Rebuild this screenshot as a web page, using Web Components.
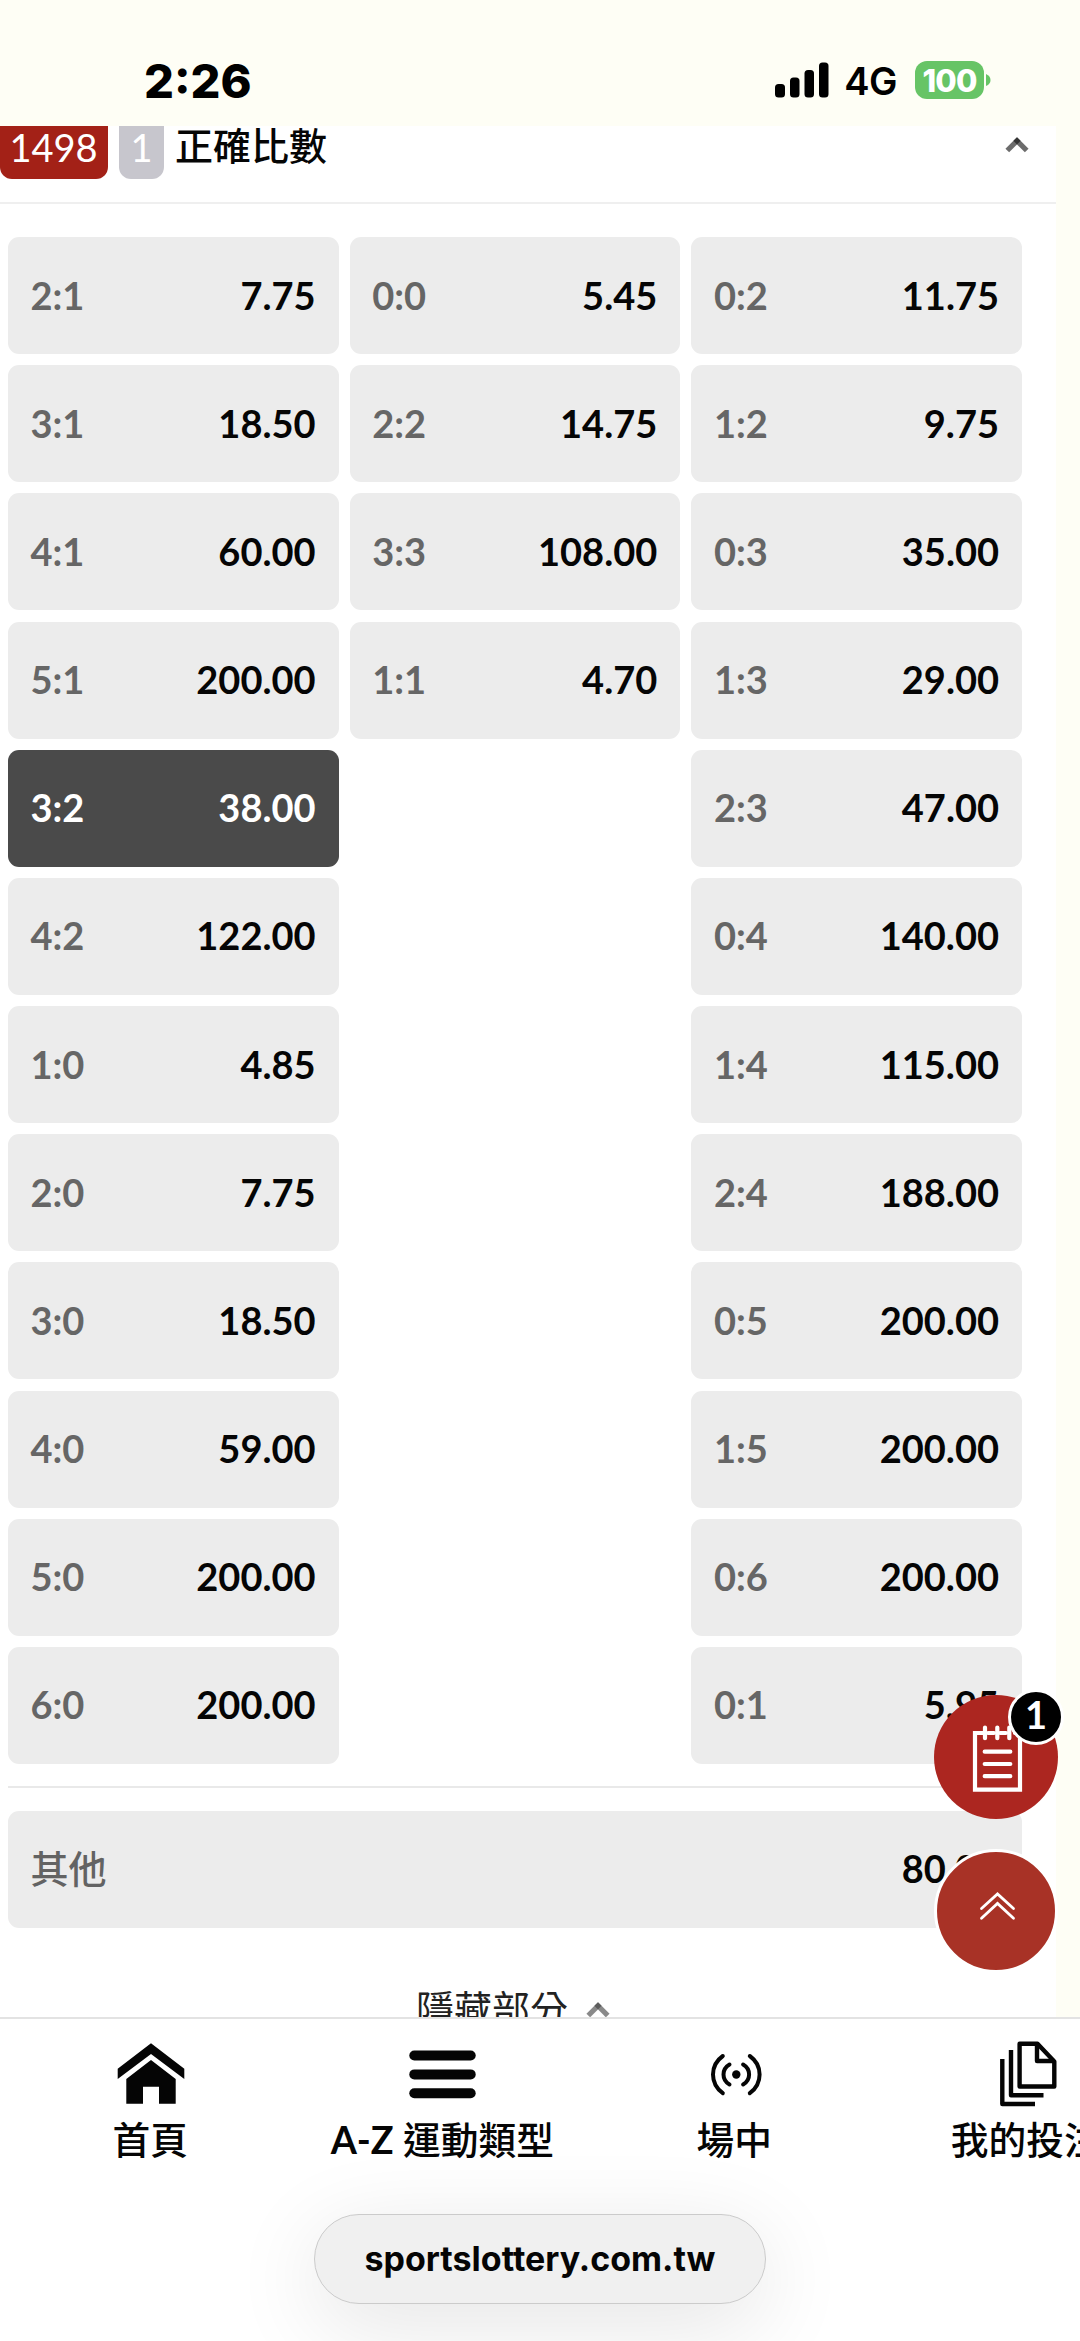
<!DOCTYPE html>
<html lang="zh-Hant">
<head>
<meta charset="utf-8">
<title>正確比數</title>
<style>
    html, body {
        margin: 0;
        padding: 0;
    }
    body {
        width: 1080px;
        height: 2341px;
        overflow: hidden;
        background: #fefef5;
        font-family: Lato, "Noto Sans CJK TC", sans-serif;
        font-size: 38px;
        color: #050505;
    }
</style>
</head>
<body>
<score-app></score-app>
<script>
class StatusBar extends HTMLElement {
    constructor() {
        super();
        this.attachShadow({mode: 'open'});
    }
    connectedCallback() {
        this.shadowRoot.innerHTML = `
            <style>
                :host {
                    display: flex;
                    align-items: center;
                    justify-content: space-between;
                    box-sizing: border-box;
                    height: 126px;
                    padding: 34px 89px 0 144px;
                    background: #fefef5;
                    font-family: Inter, sans-serif;
                    color: #000;
                }
                .time {
                    font-size: 47px;
                    font-weight: 800;
                }
                .right {
                    display: flex;
                    align-items: center;
                }
                .net {
                    font-size: 38px;
                    font-weight: 600;
                    letter-spacing: -.5px;
                    margin: 2px 18px 0 15px;
                }
                .battery {
                    width: 69px;
                    height: 38px;
                    line-height: 39px;
                    border-radius: 12px;
                    background: #67c466;
                    color: #fff;
                    font-size: 31px;
                    font-weight: 800;
                    letter-spacing: -.8px;
                    text-align: center;
                }
                svg {
                    display: block;
                }
                .nub {
                    margin-left: 2px;
                }
            </style>
            <span class="time">2:26</span>
            <div class="right">
                <svg width="54" height="36" viewBox="0 0 54 36">
                    <rect x="0" y="22" width="10" height="13.5" rx="3.5"/>
                    <rect x="15" y="15.5" width="9.5" height="20" rx="3.5"/>
                    <rect x="29.5" y="8" width="9.5" height="27.5" rx="3.5"/>
                    <rect x="44" y="0.5" width="9.5" height="35" rx="3.5"/>
                </svg>
                <span class="net">4G</span>
                <div class="battery">100</div>
                <svg class="nub" width="5" height="12" viewBox="0 0 5 12"><path d="M0 0Q4.500 2 4.500 6T0 12Z" fill="#67c466"/></svg>
            </div>
        `;
    }
}
customElements.define("status-bar", StatusBar);

class FoldArrow extends HTMLElement {
    constructor() {
        super();
        this.attachShadow({mode: 'open'});
    }
    connectedCallback() {
        this.shadowRoot.innerHTML = `
            <style>
                :host {
                    display: block;
                    width: 24px;
                    height: 17px;
                }
                svg {
                    display: block;
                }
            </style>
            <svg width="24" height="17" viewBox="0 0 24 17" stroke="#111" stroke-opacity=".62" stroke-width="5.200" fill="none">
                <path d="M2.300 14.500L13.800 3"/>
                <path d="M21.700 14.500L10.200 3"/>
            </svg>
        `;
    }
}
customElements.define("fold-arrow", FoldArrow);

class MarketHeader extends HTMLElement {
    constructor() {
        super();
        this.attachShadow({mode: 'open'});
    }
    connectedCallback() {
        this.shadowRoot.innerHTML = `
            <style>
                :host {
                    display: flex;
                    align-items: flex-start;
                    box-sizing: border-box;
                    height: 78px;
                    border-bottom: 2px solid #efefef;
                }
                .tag {
                    box-sizing: border-box;
                    height: 53px;
                    line-height: 43px;
                    border-radius: 0 0 12px 12px;
                    color: #fff;
                    text-align: center;
                }
                .id {
                    width: 108px;
                    padding-right: 1px;
                    background: #a32117;
                }
                .legs {
                    width: 45px;
                    margin: 0 11px;
                    background: #c7c6cd;
                }
                .name {
                    flex: 1;
                    line-height: 39px;
                    font-weight: 500;
                }
                fold-arrow {
                    margin: 10px 27px 0 0;
                }
            </style>
            <span class="tag id">${this.getAttribute("code")}</span>
            <span class="tag legs">${this.getAttribute("legs")}</span>
            <span class="name"><slot></slot></span>
            <fold-arrow></fold-arrow>
        `;
    }
}
customElements.define("market-header", MarketHeader);

class OddsButton extends HTMLElement {
    constructor() {
        super();
        this.attachShadow({mode: 'open'});
    }
    connectedCallback() {
        this.shadowRoot.innerHTML = `
            <style>
                :host {
                    display: flex;
                    align-items: center;
                    justify-content: space-between;
                    box-sizing: border-box;
                    height: 117px;
                    padding: 0 23px 2px 22.5px;
                    border-radius: 11px;
                    background: #ececec;
                    line-height: 46px;
                }
                .label {
                    color: #666;
                    font-weight: 700;
                }
                :host([wide]) .label {
                    color: #636363;
                    font-weight: 500;
                }
                .odds {
                    font-weight: 700;
                }
                :host([selected]) {
                    background: #4a4a4a;
                }
                :host([selected]) span {
                    color: #fff;
                }
            </style>
            <span class="label">${this.getAttribute("label")}</span>
            <span class="odds">${this.getAttribute("odds")}</span>
        `;
    }
}
customElements.define("odds-button", OddsButton);

const home = [
    ["2:1", "7.75"], ["3:1", "18.50"], ["4:1", "60.00"], ["5:1", "200.00"],
    ["3:2", "38.00"], ["4:2", "122.00"], ["1:0", "4.85"], ["2:0", "7.75"],
    ["3:0", "18.50"], ["4:0", "59.00"], ["5:0", "200.00"], ["6:0", "200.00"]
];
const draw = [["0:0", "5.45"], ["2:2", "14.75"], ["3:3", "108.00"], ["1:1", "4.70"]];
const away = [
    ["0:2", "11.75"], ["1:2", "9.75"], ["0:3", "35.00"], ["1:3", "29.00"],
    ["2:3", "47.00"], ["0:4", "140.00"], ["1:4", "115.00"], ["2:4", "188.00"],
    ["0:5", "200.00"], ["1:5", "200.00"], ["0:6", "200.00"], ["0:1", "5.95"]
];

class OddsBoard extends HTMLElement {
    constructor() {
        super();
        this.attachShadow({mode: 'open'});
    }
    connectedCallback() {
        const column = list => `<div class="col">${list.map(([label, odds]) =>
            `<odds-button label="${label}" odds="${odds}"${label === "3:2" ? " selected" : ""}></odds-button>`
        ).join('')}</div>`;
        this.shadowRoot.innerHTML = `
            <style>
                :host {
                    display: block;
                    padding: 33px 34px 0 8px;
                }
                .cols {
                    display: grid;
                    grid-template-columns: repeat(3, 1fr);
                    gap: 11.2px;
                    padding-bottom: 22px;
                    border-bottom: 2px solid #e9e9e9;
                    margin-bottom: 23px;
                }
                .col {
                    display: flex;
                    flex-direction: column;
                    gap: 11.180px;
                }
                .fold {
                    display: flex;
                    justify-content: center;
                    gap: 18px;
                    margin: 57px 4px 0 0;
                    line-height: 46px;
                    color: #222;
                }
                fold-arrow {
                    margin-top: 16px;
                    opacity: .8;
                }
            </style>
            <div class="cols">${column(home)}${column(draw)}${column(away)}</div>
            <odds-button wide label="其他" odds="80.00"></odds-button>
            <div class="fold"><span>隱藏部分</span><fold-arrow></fold-arrow></div>
        `;
    }
}
customElements.define("odds-board", OddsBoard);

class FloatButtons extends HTMLElement {
    constructor() {
        super();
        this.attachShadow({mode: 'open'});
    }
    connectedCallback() {
        this.shadowRoot.innerHTML = `
            <style>
                :host {
                    position: absolute;
                    left: 934px;
                    top: 1695px;
                    display: flex;
                    flex-direction: column;
                    align-items: center;
                    gap: 30px;
                    width: 124px;
                }
                .slip {
                    position: relative;
                    width: 124px;
                    height: 124px;
                    border-radius: 50%;
                    background: #ac2620;
                }
                .count {
                    position: absolute;
                    left: 74px;
                    top: -6px;
                    width: 50px;
                    height: 50px;
                    line-height: 44px;
                    border: 3px solid #fff;
                    border-radius: 50%;
                    background: #000;
                    color: #fff;
                    font-weight: 700;
                    text-align: center;
                }
                .top {
                    width: 118px;
                    height: 118px;
                    border: 3px solid #fff;
                    border-radius: 50%;
                    background: #a83226;
                }
                svg {
                    display: block;
                }
            </style>
            <div class="slip">
                <svg width="124" height="124" viewBox="0 0 124 124" stroke="#fff" stroke-width="4.200" stroke-linecap="round" fill="none">
                    <path d="M51 38H41V94.700H86V38H81M60 38H54M72 38H66"/>
                    <path d="M51 32.500V43.200M63.300 32.500V43.200M75.300 32.500V43.200"/>
                    <path d="M50.700 56.700H76.300M50.700 69H76.300M50.700 81.200H76.300"/>
                </svg>
                <span class="count">1</span>
            </div>
            <div class="top">
                <svg width="118" height="118" viewBox="0 0 118 118" stroke="#fff" stroke-width="2.800" stroke-linecap="round" fill="none">
                    <path d="M44.500 56.500L60.500 42L76.500 56.500M44.500 66.300L60.500 51.500L76.500 66.300"/>
                </svg>
            </div>
        `;
    }
}
customElements.define("float-buttons", FloatButtons);

class NavItem extends HTMLElement {
    constructor() {
        super();
        this.attachShadow({mode: 'open'});
    }
    connectedCallback() {
        this.shadowRoot.innerHTML = `
            <style>
                :host {
                    flex: 0 0 292px;
                    display: flex;
                    flex-direction: column;
                    align-items: center;
                    padding-top: 18px;
                    font-size: 37.7px;
                    font-weight: 500;
                    line-height: 46px;
                    white-space: nowrap;
                }
                .icon {
                    height: 80px;
                }
                .text {
                    margin-right: 1.5px;
                }
            </style>
            <div class="icon"><slot name="icon"></slot></div>
            <span class="text"><slot></slot></span>
        `;
    }
}
customElements.define("nav-item", NavItem);

class BottomNav extends HTMLElement {
    constructor() {
        super();
        this.attachShadow({mode: 'open'});
    }
    connectedCallback() {
        this.shadowRoot.innerHTML = `
            <style>
                :host {
                    display: flex;
                    height: 195px;
                    padding-left: 5px;
                    overflow: hidden;
                    border-top: 2px solid #e3e3e3;
                }
                svg {
                    display: block;
                    width: 72px;
                    height: 72px;
                }
                b {
                    font-weight: 700;
                }
            </style>
            <nav-item>
                <svg slot="icon" viewBox="0 0 72 72" fill="#050505">
                    <path d="M36 6.300L69.300 31.700V42L36 17L2.700 42V31.700Z"/>
                    <path d="M36 23L60.700 42V66.700H44V49.700H28V66.700H11.300V42Z"/>
                </svg>
                首頁
            </nav-item>
            <nav-item>
                <svg slot="icon" viewBox="0 0 72 72" fill="#050505">
                    <rect x="2.300" y="13.500" width="66.400" height="10" rx="5"/>
                    <rect x="2.300" y="32.400" width="66.400" height="10" rx="5"/>
                    <rect x="2.300" y="51.200" width="66.400" height="10" rx="5"/>
                </svg>
                <b>A-Z</b> 運動類型
            </nav-item>
            <nav-item>
                <svg slot="icon" viewBox="0 0 72 72" fill="none" stroke="#050505" stroke-width="4" stroke-linecap="round">
                    <circle cx="37.300" cy="37.500" r="4.200" fill="#050505" stroke="none"/>
                    <path d="M30.500 27.500Q24.500 31 24.500 37.500T30.500 47.500M44.100 27.500Q50.100 31 50.100 37.500T44.100 47.500"/>
                    <path d="M23.800 19Q14 26 14 37.500T23.800 56.200M50.800 19Q60.600 26 60.600 37.500T50.800 56.200"/>
                </svg>
                場中
            </nav-item>
            <nav-item>
                <svg slot="icon" viewBox="0 0 72 72" fill="none" stroke="#050505" stroke-width="4.400" stroke-linejoin="round">
                    <path d="M28.600 6.700H46.500L63.300 24.500V49.500H28.600Z"/>
                    <path d="M46 6.700V24H63.300"/>
                    <path d="M20 13V58.300H52.500M11.300 22V67H44"/>
                </svg>
                我的投注
            </nav-item>
        `;
    }
}
customElements.define("bottom-nav", BottomNav);

class AddressPill extends HTMLElement {
    constructor() {
        super();
        this.attachShadow({mode: 'open'});
    }
    connectedCallback() {
        this.shadowRoot.innerHTML = `
            <style>
                :host {
                    display: block;
                    box-sizing: border-box;
                    width: 452px;
                    height: 90px;
                    line-height: 87px;
                    margin: 0 auto;
                    border: 1.5px solid #cbcbcb;
                    border-radius: 45px;
                    background: #f0f0f0;
                    box-shadow: 0 20px 90px rgba(0, 0, 0, .11);
                    font-family: Inter, sans-serif;
                    font-size: 34px;
                    font-weight: 700;
                    text-align: center;
                }
            </style>
            <slot></slot>
        `;
    }
}
customElements.define("address-pill", AddressPill);

class ScoreApp extends HTMLElement {
    constructor() {
        super();
        this.attachShadow({mode: 'open'});
    }
    connectedCallback() {
        this.shadowRoot.innerHTML = `
            <style>
                :host {
                    position: relative;
                    display: flex;
                    flex-direction: column;
                    height: 2341px;
                    overflow: hidden;
                }
                main {
                    flex: 0 0 1891px;
                    width: 1056px;
                    overflow: hidden;
                    background: #fff;
                }
                footer {
                    flex: 1;
                    background: #fff;
                }
            </style>
            <status-bar></status-bar>
            <main>
                <market-header code="1498" legs="1">正確比數</market-header>
                <odds-board></odds-board>
            </main>
            <footer>
                <bottom-nav></bottom-nav>
                <address-pill>sportslottery.com.tw</address-pill>
            </footer>
            <float-buttons></float-buttons>
        `;
    }
}
customElements.define("score-app", ScoreApp);
</script>
</body>
</html>
